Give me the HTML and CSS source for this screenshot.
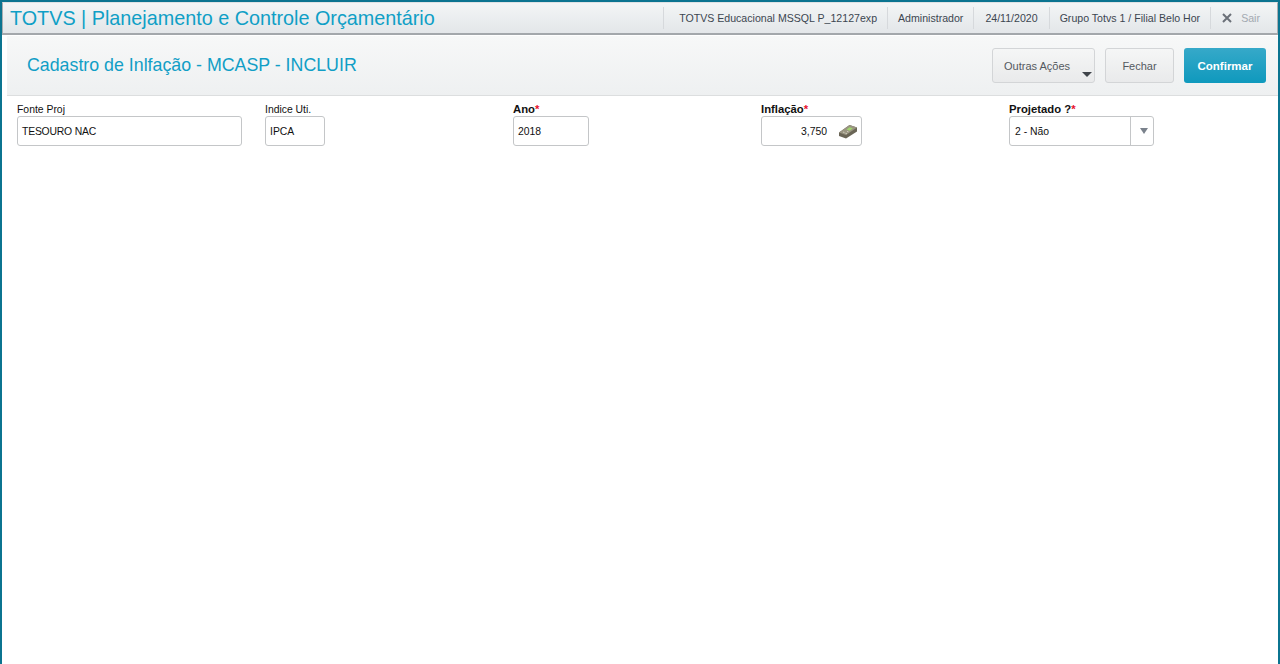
FILE: index.html
```html
<!DOCTYPE html>
<html lang="pt-BR">
<head>
<meta charset="utf-8">
<title>TOTVS | Planejamento e Controle Orçamentário</title>
<link rel="stylesheet" href="styles.css">
</head>
<body>
<div class="app">
  <header class="topbar">
    <div class="brand">TOTVS | Planejamento e Controle Orçamentário</div>
    <nav class="info">
      <span class="info-item">TOTVS Educacional MSSQL P_12127exp</span>
      <span class="info-item">Administrador</span>
      <span class="info-item date">24/11/2020</span>
      <span class="info-item">Grupo Totvs 1 / Filial Belo Hor</span>
      <span class="info-item exit">
        <svg class="x" width="10" height="10" viewBox="0 0 10 10"><path d="M1 1 9 9M9 1 1 9" stroke="#6b7078" stroke-width="2"/></svg>
        <span>Sair</span>
      </span>
    </nav>
  </header>
  <main class="content">
    <section class="toolbar">
      <h1 class="title">Cadastro de Inlfação - MCASP - INCLUIR</h1>
      <div class="actions">
        <button class="btn btn-more">Outras Ações<span class="caret"></span></button>
        <button class="btn btn-close">Fechar</button>
        <button class="btn btn-primary">Confirmar</button>
      </div>
    </section>
    <form class="fields">
      <div class="field">
        <label>Fonte Proj</label>
        <div class="box w225 tight">TESOURO NAC</div>
      </div>
      <div class="field">
        <label>Indice Uti.</label>
        <div class="box w60">IPCA</div>
      </div>
      <div class="field">
        <label class="req">Ano<i>*</i></label>
        <div class="box w76">2018</div>
      </div>
      <div class="field">
        <label class="req">Inflação<i>*</i></label>
        <div class="box w101 money">
          <span>3,750</span>
          <svg width="20" height="15" viewBox="0 0 20 15"><path d="M1 8.500 11.500 1 19 3.500 19 7.500 8 14.500 1 12Z" fill="#6a6556"/><path d="M1 8.500 11.500 1 19 3.500 8 11Z" fill="#9a9582"/><path d="M8.500 5.500 11.500 3.200 14.800 4.300 11.700 6.700Z" fill="#a2d56f"/><path d="M5 8 6.500 8.700M7.500 9.300 9 9.800M9 7.300 10.500 7.900" stroke="#cfccbc"/></svg>
        </div>
      </div>
      <div class="field">
        <label class="req">Projetado ?<i>*</i></label>
        <div class="box w145 select">
          <span class="value">2 - Não</span>
          <span class="arrow"><span class="tri"></span></span>
        </div>
      </div>
    </form>
  </main>
</div>
</body>
</html>
```
FILE: styles.css
```css
* { box-sizing: border-box; }
html, body { margin: 0; height: 100%; background: #fff; }
body { font-family: "Liberation Sans", Arial, sans-serif; color: #000; overflow: hidden; }
.app {
  height: 664px;
  display: flex;
  flex-direction: column;
  border: 2px solid #0b7490;
  border-bottom: 0;
}
.topbar {
  height: 33px;
  display: flex;
  justify-content: space-between;
  align-items: center;
  background: linear-gradient(#f3f5f6, #e3e6e9);
  border: 1px solid #a9adb1;
  border-top-color: #dfe2e4;
  border-bottom: 2px solid #a3a7ab;
  flex: none;
}
.brand { font-size: 19.8px; color: #0f9fc6; padding-left: 7px; white-space: nowrap; }
.info { display: flex; height: 22px; align-items: stretch; }
.info-item {
  display: flex;
  align-items: center;
  gap: 9px;
  font-size: 10.6px;
  color: #3c4650;
  padding: 0 10px;
  border-left: 1px solid #d6d9dc;
  white-space: nowrap;
}
.info-item:first-child { padding-left: 15px; }
.info-item.date { padding: 0 11px; }
.exit { color: #a3a9b0; padding: 0 17px 0 11px; }
.content { flex: 1; padding: 1px 0 0 5px; background: #fff; }
.toolbar {
  height: 60px;
  display: flex;
  justify-content: space-between;
  align-items: center;
  padding: 0 10px 0 20px;
  background: linear-gradient(#f7f8f8, #eef0f1);
  border-bottom: 1px solid #dcdedf;
}
.title { margin: 0; font-size: 17.8px; font-weight: 400; color: #119ec6; white-space: nowrap; }
.actions { display: flex; gap: 10px; margin-right: 2px; }
.btn {
  height: 35px;
  font-family: inherit;
  font-size: 11px;
  color: #54595f;
  background: linear-gradient(#f5f6f6, #e9eaeb);
  border: 1px solid #d3d5d7;
  border-radius: 3px;
  padding: 0;
}
.btn-more { width: 103px; position: relative; text-align: left; padding-left: 11px; }
.btn-close { width: 69px; }
.btn-primary {
  width: 82px;
  color: #fff;
  font-weight: 700;
  font-size: 11.5px;
  border: 0;
  background: linear-gradient(#36a9c9, #0f99bd);
}
.caret {
  position: absolute;
  right: 2px;
  bottom: 5px;
  border-left: 5px solid transparent;
  border-right: 5px solid transparent;
  border-top: 5px solid #3f444a;
}
.fields {
  display: grid;
  grid-template-columns: repeat(5, 248px);
  padding: 7px 0 0 10px;
}
.field { display: flex; flex-direction: column; }
.field label { font-size: 10.4px; line-height: 13px; height: 13px; color: #111; white-space: nowrap; }
.field label.req { font-size: 11.3px; font-weight: 700; }
.field label i { color: #e8112d; font-style: normal; font-weight: 700; }
.box {
  height: 30px;
  display: flex;
  align-items: center;
  padding: 0 4px;
  font-size: 10.4px;
  color: #111;
  background: #fff;
  border: 1px solid #c4c6c8;
  border-radius: 3px;
}
.tight { letter-spacing: -0.2px; }
.w225 { width: 225px; }
.w60 { width: 60px; }
.w76 { width: 76px; }
.w101 { width: 101px; }
.w145 { width: 145px; }
.money { justify-content: flex-end; gap: 11px; padding-right: 3px; }
.select { padding: 0 0 0 5px; justify-content: space-between; }
.arrow {
  width: 23px;
  height: 28px;
  padding-left: 3px;
  border-left: 1px solid #c4c6c8;
  display: flex;
  align-items: center;
  justify-content: center;
}
.tri {
  border-left: 4px solid transparent;
  border-right: 4px solid transparent;
  border-top: 6px solid #7a828c;
}
```
